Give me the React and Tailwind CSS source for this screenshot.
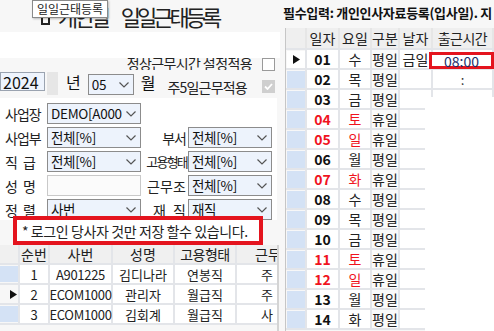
import React from "react";

const Chev = () => (
  <svg width="10" height="6" viewBox="0 0 10 6" className="shrink-0">
    <polyline points="0.5,0.5 5,5 9.5,0.5" fill="none" stroke="#555" strokeWidth="1.2" />
  </svg>
);

function Sel({ className, text }) {
  return (
    <div className={"flex items-center justify-between border border-[#8c8c8c] bg-[#edf3fc] pl-[3px] pr-[4px] " + className}>
      <span className="text-[13.5px] leading-none text-[#111] whitespace-nowrap tracking-[-0.3px]">{text}</span>
      <Chev />
    </div>
  );
}

const days = [
  ["01", "수", "평일", false],
  ["02", "목", "평일", false],
  ["03", "금", "평일", false],
  ["04", "토", "휴일", true],
  ["05", "일", "휴일", true],
  ["06", "월", "평일", false],
  ["07", "화", "휴일", true],
  ["08", "수", "평일", false],
  ["09", "목", "평일", false],
  ["10", "금", "평일", false],
  ["11", "토", "휴일", true],
  ["12", "일", "휴일", true],
  ["13", "월", "평일", false],
  ["14", "화", "평일", false],
];

const people = [
  ["1", "A901225", "김디나라", "연봉직", "주", false],
  ["2", "ECOM1000", "관리자", "월급직", "주", true],
  ["3", "ECOM1000", "김회계", "월급직", "사", false],
];

function Arrow() {
  return (
    <svg width="7" height="9" viewBox="0 0 7 9">
      <polygon points="0,0 7,4.5 0,9" fill="#111" />
    </svg>
  );
}

export default function App() {
  return (
    <div className="w-[494px] h-[331px] overflow-hidden bg-[#f7f7f7] flex font-['Noto_Sans_CJK_KR',sans-serif] text-[#111]">
      {/* LEFT */}
      <div className="w-[280px] shrink-0 relative flex flex-col">
        <div className="h-[32px] flex items-end pl-[41px] pb-[4px]">
          <div className="w-[9px] h-[11px] border-2 border-[#222] mr-[8px] mb-[3px]" />
          <span className="text-[22px] leading-[24px] tracking-[-4px] text-[#222] whitespace-nowrap">개인별</span>
          <span className="ml-[14px] text-[22px] leading-[24px] tracking-[-4px] text-[#222] whitespace-nowrap">일일근태등록</span>
        </div>
        <div className="absolute left-[32px] top-0 w-[76px] h-[18px] bg-white border border-[#8a8a8a] shadow-[1px_1px_2px_rgba(0,0,0,0.25)] flex items-center justify-center text-[12px] leading-none text-[#222]">
          일일근태등록
        </div>
        <div className="h-[26px] bg-white" />
        <div className="h-[14px] flex items-start">
          <div className="w-[252px] h-[12px] overflow-hidden flex items-end justify-end">
            <span className="text-[14px] leading-[14px] tracking-[-0.6px] text-[#222] whitespace-nowrap">정상근무시간 설정적용</span>
          </div>
          <div className="ml-auto mr-[5px] w-[13px] h-[13px] bg-white border border-[#9a9a9a]" />
        </div>
        <div className="h-[23px] flex items-start">
          <div className="w-[45px] h-[19px] border border-[#9aa3b0] bg-[#eef4fd] flex items-center pl-[2px] text-[16px] leading-none">2024</div>
          <div className="ml-[2px] w-[11px] h-[23px] bg-[#e6e6e6]" />
          <span className="ml-[8px] mt-[1px] text-[16px] leading-[18px]">년</span>
          <Sel className="ml-[7px] w-[46px] h-[21px] mt-[2px]" text="05" />
          <span className="ml-[7px] mt-[1px] text-[16px] leading-[18px]">월</span>
          <span className="ml-[12px] mt-[8px] text-[14px] leading-[14px] tracking-[-0.8px] text-[#222] whitespace-nowrap">주5일근무적용</span>
          <div className="ml-auto mr-[5px] mt-[8px] w-[13px] h-[13px] bg-[#cfcfcf] flex items-center justify-center">
            <svg width="9" height="7" viewBox="0 0 9 7">
              <polyline points="1,3.5 3.5,6 8,1" fill="none" stroke="#fff" strokeWidth="1.8" />
            </svg>
          </div>
        </div>
        <div className="h-[3px]" />
        {/* filter panel */}
        <div className="w-[277px] h-[122px] bg-white pt-[5px] flex flex-col gap-[3px] text-[14px] leading-none text-[#222]">
          <div className="flex items-center h-[21px]">
            <div className="w-[47px] pl-[5px] tracking-[-1px]">사업장</div>
            <Sel className="w-[94px] h-[21px]" text="DEMO[A000" />
          </div>
          <div className="flex items-center h-[21px]">
            <div className="w-[47px] pl-[5px] tracking-[-1px]">사업부</div>
            <Sel className="w-[94px] h-[21px]" text="전체[%]" />
            <div className="w-[47px] pr-[2px] text-right tracking-[-1px]">부서</div>
            <Sel className="w-[84px] h-[21px]" text="전체[%]" />
          </div>
          <div className="flex items-center h-[21px]">
            <div className="w-[47px] pl-[5px]"><div className="w-[31px] flex justify-between"><span>직</span><span>급</span></div></div>
            <Sel className="w-[94px] h-[21px]" text="전체[%]" />
            <div className="w-[47px] pr-[1px] text-right tracking-[-1.8px] text-[13px] whitespace-nowrap">고용형태</div>
            <Sel className="w-[84px] h-[21px]" text="전체[%]" />
          </div>
          <div className="flex items-center h-[21px]">
            <div className="w-[47px] pl-[5px]"><div className="w-[31px] flex justify-between"><span>성</span><span>명</span></div></div>
            <div className="w-[94px] h-[21px] border border-[#c9c9c9] bg-[#fbfbfb]" />
            <div className="w-[47px] pr-[2px] flex justify-end"><div className="w-[39px] flex justify-between"><span>근</span><span>무</span><span>조</span></div></div>
            <Sel className="w-[84px] h-[21px]" text="전체[%]" />
          </div>
          <div className="flex items-center h-[21px]">
            <div className="w-[47px] pl-[5px]"><div className="w-[31px] flex justify-between"><span>정</span><span>렬</span></div></div>
            <Sel className="w-[94px] h-[21px]" text="사번" />
            <div className="w-[47px] pr-[2px] flex justify-end"><div className="w-[33px] flex justify-between"><span>재</span><span>직</span></div></div>
            <Sel className="w-[84px] h-[21px]" text="재직" />
          </div>
        </div>
        {/* notice */}
        <div className="-mt-[4px] ml-[13px] w-[250px] h-[29px] border-4 border-[#e4141e] bg-white flex items-center pl-[5px] text-[14px] leading-none tracking-[-0.4px] text-[#222] whitespace-nowrap overflow-hidden">
          * 로그인 당사자 것만 저장 할수 있습니다.
        </div>
        {/* left grid */}
        <div className="w-[279px] border-r-2 border-[#d4d4d4] flex-1 bg-[#f7f7f7] text-[13px] leading-none text-[#222]">
          <div className="flex h-[20px] bg-[#f0f0f0] border-b-2 border-[#e3e5e9] text-[14px]">
            <div className="w-[20px] border-r-2 border-[#e3e5e9]" />
            <div className="w-[30px] border-r-2 border-[#e3e5e9] flex items-center justify-center">순번</div>
            <div className="w-[63px] border-r-2 border-[#e3e5e9] flex items-center justify-center">사번</div>
            <div className="w-[62px] border-r-2 border-[#e3e5e9] flex items-center justify-center">성명</div>
            <div className="w-[62px] border-r-2 border-[#e3e5e9] flex items-center justify-center tracking-[-0.5px]">고용형태</div>
            <div className="w-[40px] overflow-hidden flex items-center pl-[18px] whitespace-nowrap">근무조</div>
          </div>
          {people.map((p) => (
            <div key={p[0]} className="flex h-[20px] border-b-2 border-[#e3e5e9] bg-white">
              <div className="w-[20px] border-r-2 border-[#e3e5e9] bg-[#f7f7f7] flex items-center">
                {p[5] ? (
                  <div className="w-[18px] h-full flex items-center pl-[10px]"><Arrow /></div>
                ) : (
                  <div className="w-[18px] h-[16px] bg-[#d4e2f5]" />
                )}
              </div>
              <div className="w-[30px] border-r-2 border-[#e3e5e9] flex items-center justify-center">{p[0]}</div>
              <div className="w-[63px] border-r-2 border-[#e3e5e9] flex items-center justify-center tracking-[-0.3px]">{p[1]}</div>
              <div className="w-[62px] border-r-2 border-[#e3e5e9] flex items-center justify-center">{p[2]}</div>
              <div className="w-[62px] border-r-2 border-[#e3e5e9] flex items-center justify-center">{p[3]}</div>
              <div className="w-[38px] flex items-center justify-end pr-[2px]">{p[4]}</div>
            </div>
          ))}
        </div>
      </div>

      {/* RIGHT */}
      <div className="flex-1 relative flex flex-col">
        <div className="h-[28px] pl-[3px] pt-[5px] whitespace-nowrap text-[13px] leading-[15px] font-bold tracking-[-0.3px] text-[#111]">
          필수입력: 개인인사자료등록(입사일). 지
        </div>
        <div className="ml-[5px] border-l border-[#c6c6c6] flex-1 text-[13px] leading-none">
          <div className="flex h-[22px] bg-[#efefef] border-b-2 border-[#e3e5e9] text-[#222] text-[14px]">
            <div className="w-[21px] border-r-2 border-[#e6e6e6]" />
            <div className="w-[33px] border-r-2 border-[#e6e6e6] flex items-center justify-center">일자</div>
            <div className="w-[32px] border-r-2 border-[#e6e6e6] flex items-center justify-center">요일</div>
            <div className="w-[28px] border-r-2 border-[#e6e6e6] flex items-center justify-center">구분</div>
            <div className="w-[33px] border-r-2 border-[#e6e6e6] flex items-center justify-center">날자</div>
            <div className="w-[61px] border-r-2 border-[#e6e6e6] flex items-center justify-center tracking-[-0.5px]">출근시간</div>
          </div>
          {days.map((d, i) => (
            <div key={d[0]} className="flex h-[20px] border-b-2 border-[#e3e5e9] bg-white">
              <div className="w-[21px] border-r-2 border-[#e3e5e9] pl-[1px] pt-[1px] bg-[#f7f7f7]">
                {i === 0 ? (
                  <div className="h-full bg-white flex items-center pl-[6px]"><Arrow /></div>
                ) : (
                  <div className="h-full bg-[#d4e2f5]" />
                )}
              </div>
              <div className={"w-[33px] border-r-2 border-[#e3e5e9] flex items-center justify-center font-bold text-[14px] " + (d[3] ? "text-[#f0141e]" : "text-[#111]")}>{d[0]}</div>
              <div className={"w-[32px] border-r-2 border-[#e3e5e9] flex items-center justify-center text-[14px] " + (d[3] ? "text-[#f0141e]" : "text-[#222]")}>{d[1]}</div>
              <div className="w-[28px] border-r-2 border-[#e3e5e9] flex items-center justify-center text-[14px] text-[#222] bg-[#fafafa]">{d[2]}</div>
              <div className="w-[33px] border-r-2 border-[#e3e5e9] flex items-center justify-center text-[14px] text-[#222]">{i === 0 ? "금일" : ""}</div>
              <div className="w-[61px] border-r-2 border-[#e3e5e9] relative flex items-center justify-center text-[#333]">
                {i === 0 ? (
                  <div className="absolute left-[-4px] top-[2px] w-[65px] h-[17px] border-[3px] border-[#e4141e] bg-white flex items-center justify-center text-[14px] text-[#1d2f6b]">08:00</div>
                ) : i < 3 ? (
                  ":"
                ) : null}
              </div>
            </div>
          ))}
        </div>
        <div className="absolute left-[145px] top-[97px] right-0 bottom-0 bg-white" />
      </div>
    </div>
  );
}
